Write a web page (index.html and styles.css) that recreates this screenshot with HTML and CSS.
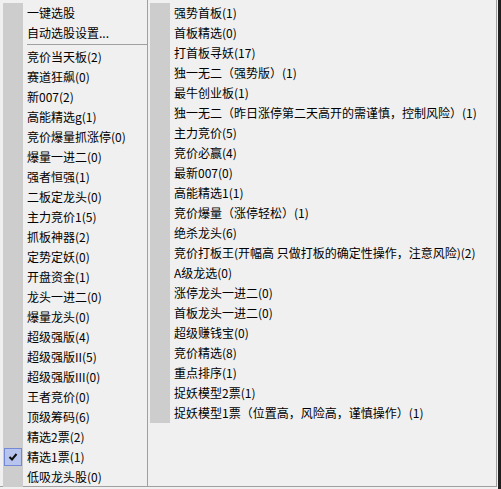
FILE: index.html
```html
<!DOCTYPE html>
<html lang="zh-CN">
<head>
<meta charset="utf-8">
<title>选股菜单</title>
<link rel="stylesheet" href="styles.css">
</head>
<body>
<div class="menu">
  <div class="frame">
    <div class="col col-left">
      <ul class="list">
        <li class="item"><span class="mark"></span><span class="label">一键选股</span></li>
        <li class="item"><span class="mark"></span><span class="label">自动选股设置...</span></li>
        <li class="sep"><span class="sep-line"></span></li>
        <li class="item"><span class="mark"></span><span class="label">竞价当天板(2)</span></li>
        <li class="item"><span class="mark"></span><span class="label">赛道狂飙(0)</span></li>
        <li class="item"><span class="mark"></span><span class="label">新007(2)</span></li>
        <li class="item"><span class="mark"></span><span class="label">高能精选g(1)</span></li>
        <li class="item"><span class="mark"></span><span class="label">竞价爆量抓涨停(0)</span></li>
        <li class="item"><span class="mark"></span><span class="label">爆量一进二(0)</span></li>
        <li class="item"><span class="mark"></span><span class="label">强者恒强(1)</span></li>
        <li class="item"><span class="mark"></span><span class="label">二板定龙头(0)</span></li>
        <li class="item"><span class="mark"></span><span class="label">主力竞价1(5)</span></li>
        <li class="item"><span class="mark"></span><span class="label">抓板神器(2)</span></li>
        <li class="item"><span class="mark"></span><span class="label">定势定妖(0)</span></li>
        <li class="item"><span class="mark"></span><span class="label">开盘资金(1)</span></li>
        <li class="item"><span class="mark"></span><span class="label">龙头一进二(0)</span></li>
        <li class="item"><span class="mark"></span><span class="label">爆量龙头(0)</span></li>
        <li class="item"><span class="mark"></span><span class="label">超级强版(4)</span></li>
        <li class="item"><span class="mark"></span><span class="label">超级强版II(5)</span></li>
        <li class="item"><span class="mark"></span><span class="label">超级强版III(0)</span></li>
        <li class="item"><span class="mark"></span><span class="label">王者竞价(0)</span></li>
        <li class="item"><span class="mark"></span><span class="label">顶级筹码(6)</span></li>
        <li class="item"><span class="mark"></span><span class="label">精选2票(2)</span></li>
        <li class="item checked">
          <span class="mark">
            <span class="check-box">
              <svg class="check-icon" width="10" height="10" viewBox="0 0 10 10" aria-hidden="true">
                <path d="M1.5 5 L4 7.5 L8.5 2" fill="none" stroke="#101010" stroke-width="2"/>
              </svg>
            </span>
          </span>
          <span class="label">精选1票(1)</span>
        </li>
        <li class="item"><span class="mark"></span><span class="label">低吸龙头股(0)</span></li>
      </ul>
    </div>
    <div class="col col-right">
      <ul class="list">
        <li class="item"><span class="mark"></span><span class="label">强势首板(1)</span></li>
        <li class="item"><span class="mark"></span><span class="label">首板精选(0)</span></li>
        <li class="item"><span class="mark"></span><span class="label">打首板寻妖(17)</span></li>
        <li class="item"><span class="mark"></span><span class="label">独一无二（强势版）(1)</span></li>
        <li class="item"><span class="mark"></span><span class="label">最牛创业板(1)</span></li>
        <li class="item"><span class="mark"></span><span class="label">独一无二（昨日涨停第二天高开的需谨慎，控制风险）(1)</span></li>
        <li class="item"><span class="mark"></span><span class="label">主力竞价(5)</span></li>
        <li class="item"><span class="mark"></span><span class="label">竞价必赢(4)</span></li>
        <li class="item"><span class="mark"></span><span class="label">最新007(0)</span></li>
        <li class="item"><span class="mark"></span><span class="label">高能精选1(1)</span></li>
        <li class="item"><span class="mark"></span><span class="label">竞价爆量（涨停轻松）(1)</span></li>
        <li class="item"><span class="mark"></span><span class="label">绝杀龙头(6)</span></li>
        <li class="item"><span class="mark"></span><span class="label">竞价打板王(开幅高 只做打板的确定性操作，注意风险)(2)</span></li>
        <li class="item"><span class="mark"></span><span class="label">A级龙选(0)</span></li>
        <li class="item"><span class="mark"></span><span class="label">涨停龙头一进二(0)</span></li>
        <li class="item"><span class="mark"></span><span class="label">首板龙头一进二(0)</span></li>
        <li class="item"><span class="mark"></span><span class="label">超级赚钱宝(0)</span></li>
        <li class="item"><span class="mark"></span><span class="label">竞价精选(8)</span></li>
        <li class="item"><span class="mark"></span><span class="label">重点排序(1)</span></li>
        <li class="item"><span class="mark"></span><span class="label">捉妖模型2票(1)</span></li>
        <li class="item"><span class="mark"></span><span class="label">捉妖模型1票（位置高，风险高，谨慎操作）(1)</span></li>
      </ul>
    </div>
  </div>
</div>
</body>
</html>
```

FILE: styles.css
```css
html, body {
  margin: 0;
  padding: 0;
  background: #1f1f1f;
}

body {
  font-family: "Noto Sans CJK SC", "Microsoft YaHei", sans-serif;
  font-size: 12px;
  color: #000;
}

/* popup menu shell: light face, shadowed right/bottom edge */
.menu {
  width: 498px;
  height: 489px;
  box-sizing: border-box;
  background: #f0f0f0;
  padding: 0 1px 2px 0;
  display: flex;
}

.frame {
  flex: 1;
  display: flex;
  border-right: 1px solid #a0a0a0;
  border-bottom: 1px solid #a0a0a0;
  padding-left: 3px;
}

.col {
  padding-top: 3px;
}

.col-left {
  width: 144px;
  flex: none;
}

.col-right {
  flex: 1;
  border-left: 1px solid #a0a0a0;
  padding-left: 2px;
}

/* item list with the grey icon gutter down its left side */
.list {
  list-style: none;
  margin: 0;
  padding: 0;
  background: linear-gradient(90deg, #cdcdcd 0 20px, transparent 20px);
}

.item {
  height: 20px;
  display: grid;
  grid-template-columns: 20px auto;
  column-gap: 4px;
  align-items: center;
  white-space: nowrap;
}

.label {
  line-height: 20px;
}

.mark {
  height: 20px;
  display: flex;
  align-items: center;
  justify-content: center;
}

.check-box {
  width: 18px;
  height: 18px;
  box-sizing: border-box;
  border: 1px solid #7389d6;
  background: #b7c4ee;
  display: flex;
  align-items: center;
  justify-content: center;
}

.check-icon {
  display: block;
}

.sep {
  height: 4px;
  padding-left: 24px;
  padding-top: 1px;
  box-sizing: border-box;
}

.sep-line {
  display: block;
  border-top: 1px solid #a0a0a0;
}
```
